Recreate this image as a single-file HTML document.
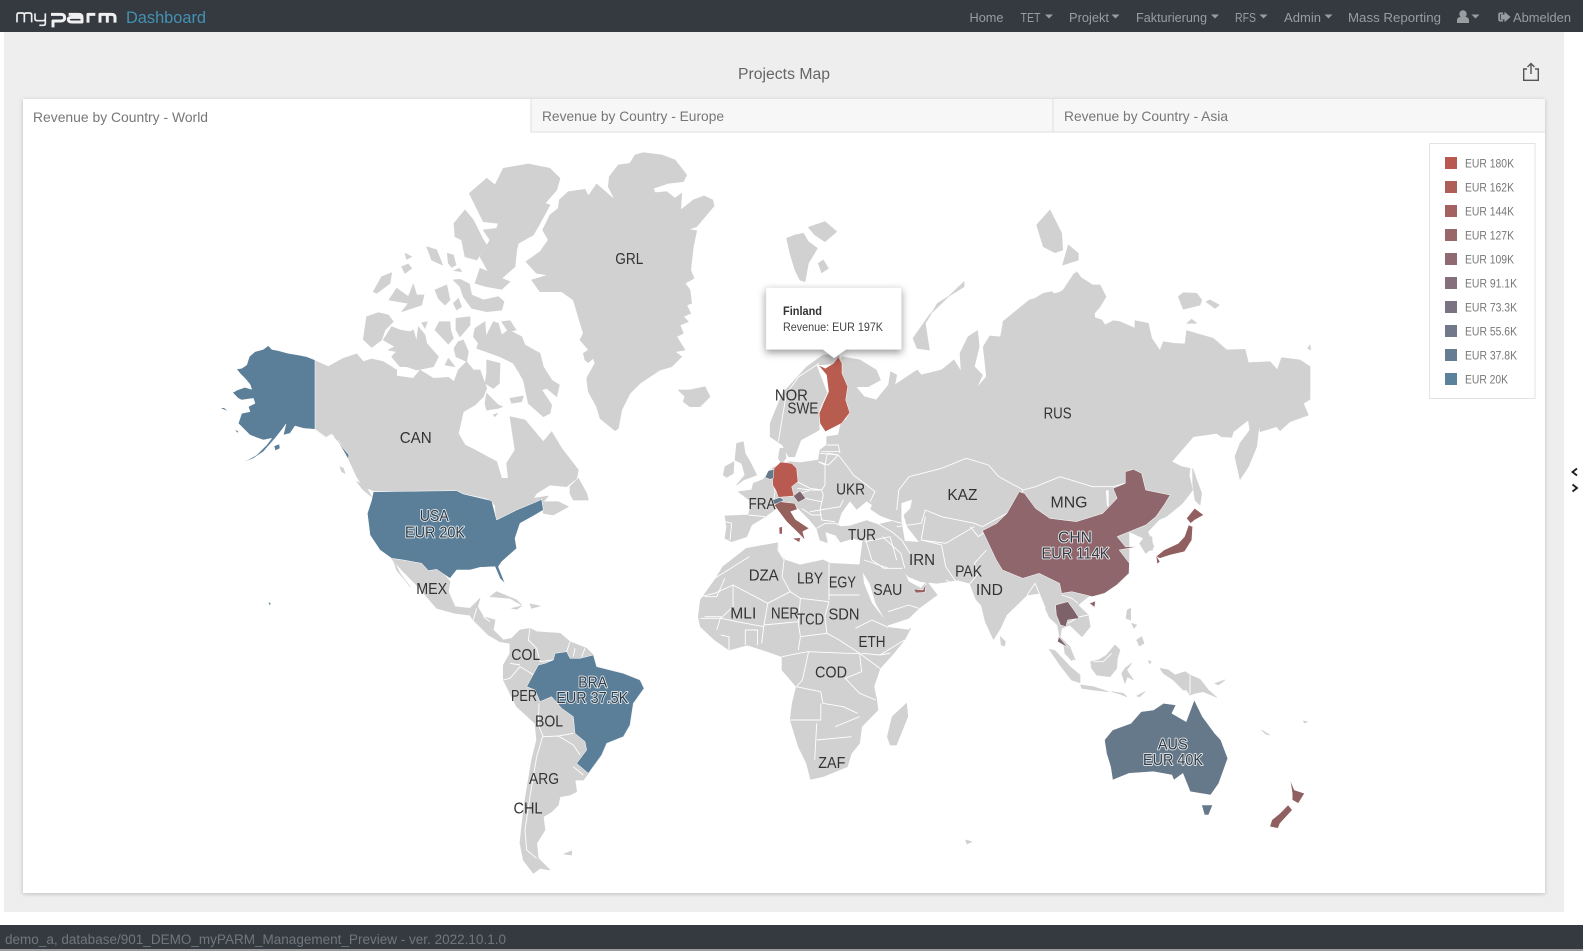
<!DOCTYPE html>
<html lang="en">
<head>
<meta charset="utf-8">
<title>myPARM Dashboard</title>
<style>
html,body{margin:0;padding:0;background:#fff;width:1583px;height:951px;overflow:hidden}
svg{display:block;font-family:"Liberation Sans",sans-serif}
.land polygon{fill:#d1d1d1;stroke:#d1d1d1;stroke-width:.7;stroke-linejoin:round;vector-effect:non-scaling-stroke}
.hole polygon{fill:#fff;stroke:#fff;stroke-width:.5;stroke-linejoin:round;vector-effect:non-scaling-stroke}
.b polyline{fill:none;stroke:#fff;stroke-width:.9;vector-effect:non-scaling-stroke;stroke-linejoin:round}
.c polygon{stroke:#fff;stroke-width:.5;stroke-linejoin:round;vector-effect:non-scaling-stroke}
.nav text{font-size:13px;fill:#9a9da0}
.tab{font-size:14px;fill:#777}
.lg text{font-size:11.5px;fill:#777}
.lb text{font-size:16px;fill:#333;text-anchor:middle}
.lv text{font-size:16px;fill:#2f3a44;text-anchor:middle;stroke:#fff;stroke-width:1.8;paint-order:stroke;stroke-linejoin:round;stroke-opacity:.85}
</style>
</head>
<body>
<svg xmlns="http://www.w3.org/2000/svg" width="1583" height="951" viewBox="0 0 1583 951">
<rect width="1583" height="951" fill="#fff"/>
<rect x="4" y="32" width="1560" height="880" fill="#eee"/>
<rect width="1583" height="32" fill="#343a40"/>
<rect y="925" width="1583" height="24" fill="#343a40"/>
<rect y="949" width="1583" height="2" fill="#9a9c9e"/>
<text x="5" y="944" font-size="13.5" fill="#6f777e" textLength="501" lengthAdjust="spacingAndGlyphs">demo_a, database/901_DEMO_myPARM_Management_Preview - ver. 2022.10.1.0</text>

<!-- logo -->
<g transform="scale(.3333)" fill="none" stroke="#f0f0f0" stroke-linejoin="round">
<path stroke-width="5" d="M51 67V45Q51 39 57 39H66Q73 39 73 45V67M73 45Q73 39 79 39H88Q95 39 95 45V67"/>
<path stroke-width="5" d="M105 40V55Q105 62 112 62H130Q136 62 136 56V40M136 60V70Q136 76 130 76H118"/>
<path stroke-width="9" d="M153 43H183Q194 43 194 53Q194 63 183 63H159V82"/>
<path stroke-width="9" d="M206 43H236Q246 43 246 52V66H216Q205 66 205 58Q205 52 216 52H244"/>
<path stroke-width="9" d="M264 68V43H286"/>
<path stroke-width="9" d="M300 68V43H334Q345 43 345 52V68M322 43V68"/>
</g>
<text x="126" y="23" font-size="17" fill="#4491b3" textLength="80" lengthAdjust="spacingAndGlyphs">Dashboard</text>

<!-- nav -->
<g class="nav">
<text x="969.5" y="22" textLength="34" lengthAdjust="spacingAndGlyphs">Home</text>
<text x="1020.5" y="22" textLength="20" lengthAdjust="spacingAndGlyphs">TET</text>
<text x="1069" y="22" textLength="40" lengthAdjust="spacingAndGlyphs">Projekt</text>
<text x="1136" y="22" textLength="71" lengthAdjust="spacingAndGlyphs">Fakturierung</text>
<text x="1235" y="22" textLength="21" lengthAdjust="spacingAndGlyphs">RFS</text>
<text x="1284" y="22" textLength="37" lengthAdjust="spacingAndGlyphs">Admin</text>
<text x="1348" y="22" textLength="93" lengthAdjust="spacingAndGlyphs">Mass Reporting</text>
<text x="1513" y="22" textLength="58" lengthAdjust="spacingAndGlyphs">Abmelden</text>
</g>
<g fill="#9a9da0">
<polygon points="1045,14.5 1053,14.5 1049,18.5"/>
<polygon points="1111.5,14.5 1119.5,14.5 1115.5,18.5"/>
<polygon points="1211,14.5 1219,14.5 1215,18.5"/>
<polygon points="1259.5,14.5 1267.5,14.5 1263.5,18.5"/>
<polygon points="1324.5,14.5 1332.5,14.5 1328.5,18.5"/>
<polygon points="1471.5,14.5 1479.5,14.5 1475.5,18.5"/>
<circle cx="1463" cy="14" r="3.7"/>
<path d="M1457 23v-2.5q0-3.5 3.5-3.5h5q3.5 0 3.5 3.5V23z"/>
<path d="M1503 12.5h-3q-1.7 0-1.7 1.7v5.6q0 1.7 1.7 1.7h3v-1.6h-2.8v-5.8h2.8z"/>
<path d="M1504.5 14.5v-2.7l6 5.2-6 5.2v-2.7h-3.5v-5z"/>
</g>

<!-- title + share -->
<text x="738" y="79" font-size="15.5" fill="#666" textLength="92" lengthAdjust="spacingAndGlyphs">Projects Map</text>
<g fill="none" stroke="#555" stroke-width="1.4">
<path d="M1527 69h-3.3v11.3h14.6V69H1535"/>
<path d="M1531 74V64M1527.5 67l3.5-3.5 3.5 3.5"/>
</g>

<!-- card -->
<rect x="23" y="99" width="1522" height="794" fill="#fff" style="filter:drop-shadow(0 1px 2px rgba(0,0,0,.2))"/>
<rect x="531" y="99" width="1014" height="33" fill="#f7f7f7"/>
<path d="M531 99V132H1545M1053 99V132" fill="none" stroke="#dfdfdf" stroke-width="1"/>
<text class="tab" x="33" y="122" textLength="175" lengthAdjust="spacingAndGlyphs">Revenue by Country - World</text>
<text class="tab" x="542" y="121" textLength="182" lengthAdjust="spacingAndGlyphs">Revenue by Country - Europe</text>
<text class="tab" x="1064" y="121" textLength="164" lengthAdjust="spacingAndGlyphs">Revenue by Country - Asia</text>

<!-- MAP LAND -->
<g class="land">
<!-- North America arctic / Canada (3x coords origin 200,140) -->
<g transform="translate(200,140) scale(.33333)">
<polygon points="345,662 385,680 430,655 470,642 490,665 515,657 550,665 590,690 590,708 640,715 660,690 700,715 745,712 762,725 775,690 800,665 820,690 840,690 860,745 850,770 825,795 790,815 775,880 795,915 825,930 890,965 905,1015 925,1015 920,970 945,930 930,830 975,840 1030,905 1055,875 1085,925 1135,990 1130,1015 1100,1040 1050,1035 1010,1060 1000,1075 1045,1068 1030,1085 1075,1085 1105,1100 1060,1125 1030,1120 1022,1078 960,1108 890,1145 885,1095 860,1075 790,1060 775,1052 520,1052 490,1040 470,1010 445,955 415,905 395,882 378,892 345,868"/>
<polygon points="1110,1040 1135,1015 1160,1060 1165,1080 1120,1080 1110,1060"/>
<polygon points="470,1025 495,1035 515,1070 490,1050"/>
<polygon points="420,980 430,985 435,1000 425,995"/>
<polygon points="500,530 535,518 565,525 580,545 555,570 545,600 515,622 490,598"/>
<polygon points="550,600 575,560 600,570 630,575 640,570 650,605 655,560 675,585 680,610 715,650 700,680 650,690 620,680 600,680 575,650 590,635 565,630 585,620"/>
<polygon points="615,340 635,350 620,358"/>
<polygon points="605,380 625,372 635,385 615,400"/>
<polygon points="520,455 545,410 575,398 570,430 530,460"/>
<polygon points="567,480 590,445 625,470 640,432 650,465 672,465 665,495 605,515 625,490"/>
<polygon points="680,320 710,330 728,375 695,360"/>
<polygon points="742,340 760,345 768,375 755,382 745,370"/>
<polygon points="762,392 778,385 785,395"/>
<polygon points="762,250 795,210 820,240 850,300 860,315 830,360 795,350 785,300 765,290"/>
<polygon points="808,160 860,115 885,135 910,85 985,72 1050,85 1080,115 1070,150 1035,190 1050,195 1020,250 1000,285 955,310 950,330 945,380 905,415 930,425 905,448 860,440 825,430 840,385 865,395 840,350 870,300 850,270 890,265 895,250 850,245"/>
<polygon points="760,420 780,418 808,432 815,465 850,480 895,470 912,485 905,510 860,515 815,505 790,470 780,440"/>
<polygon points="705,450 740,435 750,480 735,495 715,475"/>
<polygon points="760,490 775,475 785,500 770,510"/>
<polygon points="768,535 810,530 810,555 780,590 768,570"/>
<polygon points="705,570 718,545 750,545 752,570 760,595 745,612"/>
<polygon points="665,548 682,545 675,565"/>
<polygon points="775,605 790,600 805,635 800,665 790,660 768,650 762,625"/>
<polygon points="825,565 855,545 858,590 880,545 895,550 905,585 925,570 965,590 975,615 1020,640 1030,680 1055,720 1078,735 1070,770 1040,745 1025,750 1055,795 1050,820 1030,830 985,790 970,720 940,670 900,650 830,625 835,610 820,590"/>
<polygon points="905,545 930,542 948,570 925,575"/>
<polygon points="860,660 900,670 898,730 880,745 855,730 860,700"/>
<polygon points="855,790 860,760 895,795 908,800 895,805 860,810"/>
<polygon points="930,775 970,768 965,785 935,790"/>
<polygon points="880,825 893,820 885,830"/>
<polygon points="735,675 745,655 765,680"/>
<!-- Mexico, central america, south america (coords+420,1020 from 340,480 crop) -->
<g transform="translate(420,1020)">
<polygon points="155,237 250,250 295,265 330,305 325,335 345,380 390,385 420,355 410,390 385,405 345,400 290,385 260,350 225,310 190,275"/>
<polygon points="160,240 180,280 210,320 195,300 170,270"/>
<polygon points="385,400 400,395 410,375 430,410 465,420 460,450 490,480 515,475 510,490 480,485 445,465 400,420"/>
<polygon points="450,350 470,335 530,360 545,375 510,355"/>
<polygon points="570,372 600,378 575,385"/>
<polygon points="515,385 545,378 530,388"/>
<polygon points="510,480 540,450 570,445 590,455 660,460 690,485 740,505 760,525 770,560 850,580 900,600 912,625 880,670 870,735 850,770 800,790 785,825 745,880 730,900 705,900 710,935 690,945 660,950 655,975 635,995 610,1010 615,1050 590,1090 595,1135 630,1170 600,1165 580,1180 550,1140 540,1090 545,1040 555,960 575,840 590,780 585,730 530,680 490,600 490,555 510,520"/>
<polygon points="672,1122 695,1113 695,1125"/>
</g>
</g>
<!-- Greenland, Iceland, Svalbard (origin 520,140) -->
<g transform="translate(520,140) scale(.33333)">
<polygon points="18,365 60,335 85,300 68,270 90,225 115,205 118,180 145,155 195,148 205,168 230,132 285,180 265,140 268,110 295,75 330,70 345,45 370,38 425,45 465,60 500,105 490,125 445,130 400,145 405,158 440,155 465,175 485,160 482,210 520,180 552,168 578,180 582,198 555,230 530,260 505,268 530,272 520,320 512,390 522,415 495,430 510,450 515,490 500,495 512,520 490,530 505,545 480,555 490,580 470,590 495,630 465,635 485,650 455,680 420,690 360,730 330,760 305,810 295,865 285,872 240,835 230,800 205,755 200,715 225,670 215,640 180,600 190,580 160,480 125,455 60,455 35,420 85,405 50,400"/>
<polygon points="190,640 205,630 225,650 205,668 195,660"/>
<polygon points="475,750 510,750 555,740 570,770 540,800 510,800 490,785 495,770"/>
<polygon points="800,295 825,285 850,280 865,305 892,325 865,370 855,425 840,420 825,390 810,340"/>
<polygon points="865,262 885,255 915,245 950,275 915,305 885,285"/>
<polygon points="895,370 910,360 925,385 905,398"/>
</g>
<!-- Russia east (origin 1000,190) -->
<g transform="translate(1000,190) scale(.33333)">
<polygon points="198,295 230,245 245,265 260,285 300,285 318,320 300,350 275,380 305,390 315,405 340,392 360,395 405,415 405,392 445,400 455,445 480,482 490,455 520,460 555,462 560,422 640,445 680,480 735,478 745,518 810,515 832,540 845,503 900,510 930,530 930,628 910,640 925,675 870,695 840,722 830,710 780,725 785,680 750,720 745,690 700,725 695,742 665,740 650,730 580,740 515,815 545,830 570,835 565,880 560,900 0,900 0,450 10,395 60,385 65,350 130,310 155,305 165,315"/>
<polygon points="780,680 785,695 775,725 770,770 745,830 720,868 705,800 720,760 750,720"/>
<polygon points="578,835 590,870 605,910 600,945 585,930 578,880"/>
<polygon points="535,320 550,308 590,310 605,330 600,345 550,358"/>
<polygon points="618,335 630,330 658,345 645,355"/>
<polygon points="560,400 575,388 590,400"/>
<polygon points="110,105 150,60 185,130 188,180 165,188 130,170"/>
<polygon points="205,165 235,190 235,210 188,225"/>
<polygon points="923,475 930,465 932,480"/>
</g>
<!-- Eurasia mid (origin 660,260; 2.45x,3y) -->
<g transform="translate(660,260) scale(.40816,.33333)">
<polygon points="445,290 490,300 530,330 540,360 510,380 480,380 500,410 530,420 560,375 565,335 580,345 575,375 630,330 640,345 690,330 720,300 738,335 735,280 755,230 778,212 782,260 770,320 790,345 775,385 800,350 792,260 808,228 845,232 840,185 905,120 985,95 1015,40 1060,75 1100,850 720,900 500,620 440,510 465,460 430,380"/>
<polygon points="1150,600 1255,610 1295,640 1305,690 1280,730 1240,770 1190,795 1100,800 1100,600"/>
<polygon points="1150,815 1230,770 1195,815 1210,860 1190,880 1175,850 1185,835"/>
<polygon points="1185,830 1205,830 1207,870 1190,872"/>
<polygon points="620,235 660,165 745,65 745,80 680,130 650,190 660,270 630,265"/>
<!-- Scandinavia -->
<polygon points="437,282 400,285 360,320 330,360 300,400 270,490 270,530 300,555 315,590 330,590 345,540 390,510 390,450 410,395 385,315 445,310"/>
</g>
<!-- Europe (origin 710,420) -->
<g transform="translate(710,420) scale(.33333)">
<polygon points="385,45 350,50 350,75 330,90 325,120 270,128 240,125 215,130 185,145 160,178 130,190 125,210 85,215 125,245 115,285 45,288 50,320 45,355 65,365 110,350 125,315 165,290 200,265 225,265 262,262 295,295 320,325 330,360 352,368 345,335 375,345 380,370 430,355 465,365 460,420 690,420 690,0 395,0"/>
<polygon points="205,115 210,85 225,85 228,115 215,130"/>
<polygon points="80,70 100,65 105,100 120,125 140,165 100,180 80,195 105,165 95,130 75,120"/>
<polygon points="40,165 45,140 72,125 70,160 50,172"/>
</g>
<!-- Africa / South Asia (origin 680,540; 2.45x,3y) -->
<g transform="translate(680,540) scale(.40816,.33333)">
<polygon points="105,80 163,25 241,8 241,35 257,60 294,75 351,60 367,70 445,75 450,130 470,190 505,245 510,262 560,270 565,265 550,300 520,345 490,385 475,440 482,480 485,510 445,560 440,610 420,640 410,680 350,710 320,718 310,670 290,620 270,540 275,490 285,440 250,390 250,350 215,335 165,315 120,330 85,300 50,260 45,230 50,180 85,120"/>
<polygon points="555,490 558,530 530,615 515,615 508,590 520,530"/>
<polygon points="785,290 797,305 795,318 787,315"/>
<polygon points="450,-20 540,-20 545,85 560,125 590,145 605,125 630,165 585,205 560,235 510,255 480,190 465,130 440,80"/>
<polygon points="540,85 560,110 590,125 630,130 680,120 710,130 725,178 738,195 748,245 768,298 785,265 800,225 850,165 880,160 895,205 905,232 925,255 930,290 955,320 968,360 945,325 930,300 935,265 955,255 985,290 1005,260 1000,225 975,195 1000,170 1030,160 1100,100 1100,-100 540,-100"/>
<polygon points="700,900 715,905 703,912"/>
<polygon points="1425,570 1445,585 1435,582"/>
<polygon points="1527,543 1537,545 1530,549"/>
</g>
<!-- SE Asia (origin 1040,590) -->
<g transform="translate(1040,590) scale(.33333)">
<polygon points="28,178 45,182 90,230 120,255 120,278 95,270 60,225"/>
<polygon points="72,170 90,180 103,205 95,212 75,190"/>
<polygon points="152,215 175,210 200,195 225,165 240,180 232,205 230,235 210,260 170,255 155,235"/>
<polygon points="122,285 160,290 205,305 160,300 125,295"/>
<polygon points="245,250 255,235 275,220 260,240 280,270 262,260 255,280 250,265"/>
<polygon points="262,60 272,55 272,90 258,85"/>
<polygon points="290,150 305,140 312,160 298,168"/>
<polygon points="275,100 290,105 282,115"/>
<polygon points="360,235 385,240 405,255 435,245 450,255 480,268 505,300 530,322 490,305 465,310 450,315 440,300 430,300 400,270 370,250"/>
<polygon points="290,318 315,305 300,320"/>
<polygon points="525,280 555,270 535,285"/>
<polygon points="215,305 250,310 260,320 240,312"/>
<polygon points="325,212 333,214 330,222"/>
</g>
</g>

<!-- water holes -->
<g class="hole">
<g transform="translate(710,420) scale(.33333)">
<polygon points="385,312 395,280 420,245 440,270 470,245 485,255 480,268 510,288 545,302 505,312 470,300 420,316 390,318"/>
<polygon points="575,250 605,240 600,265 580,285 590,320 625,365 585,362 575,300"/>
<polygon points="375,345 395,375 380,372"/>
</g>
<g transform="translate(200,140) scale(.33333)">
<polygon points="942,705 955,695 960,720 945,725"/>
</g>
</g>

<!-- borders -->
<g class="b">
<g transform="translate(710,420) scale(.33333)">
<polyline points="262,185 300,205 335,210 345,195 345,135 352,100 385,105 420,150 430,165 470,195 495,215 480,245"/>
<polyline points="345,135 325,125"/>
<polyline points="330,100 385,105"/>
<polyline points="325,125 355,135 385,105"/>
<polyline points="350,75 385,75 390,100"/>
<polyline points="262,205 300,210 335,210 340,225 330,270 390,260 400,240"/>
<polyline points="260,225 300,210"/>
<polyline points="285,235 335,245"/>
<polyline points="300,275 330,270 335,300 375,305"/>
<polyline points="275,265 305,285 335,285"/>
<polyline points="320,325 345,310 375,310"/>
<polyline points="375,310 395,318"/>
<polyline points="185,145 195,215 190,250 200,265"/>
<polyline points="115,285 165,290"/>
<polyline points="48,305 65,310 60,360"/>
<polyline points="505,312 545,335 575,360 600,400"/>
<polyline points="465,365 540,350"/>
<polyline points="540,350 560,420"/>
<polyline points="510,290 540,300 575,310"/>
</g>
<g transform="translate(660,260) scale(.40816,.33333)">
<polyline points="580,750 585,690 610,650 690,625 750,595 805,615 830,650 890,690"/>
<polyline points="580,800 640,790 650,750 690,770 770,790 790,800 850,760 890,690"/>
<polyline points="890,690 920,680 980,650 1060,680 1110,680 1140,670"/>
<polyline points="650,770 640,840 700,850 770,800"/>
<polyline points="760,800 780,830 800,812"/>
<polyline points="690,855 700,920 725,965"/>
<polyline points="800,870 770,910 780,940 750,985 700,960"/>
<polyline points="545,830 590,880 600,925"/>
<polyline points="640,840 690,855"/>
<polyline points="500,900 560,925"/>
<polyline points="390,310 340,350 310,400 300,470 290,545"/>
<polyline points="385,315 410,395"/>
<polyline points="395,575 440,575"/>
</g>
<g transform="translate(680,540) scale(.40816,.33333)">
<polyline points="50,170 85,160 130,135 130,200 100,235 50,235"/>
<polyline points="85,115 170,50"/>
<polyline points="130,135 215,190 205,260"/>
<polyline points="205,260 140,245 100,235"/>
<polyline points="205,255 290,245"/>
<polyline points="215,190 270,155 295,175 290,250 295,290 290,330"/>
<polyline points="241,8 240,30 255,60 250,110 270,155"/>
<polyline points="365,70 365,180"/>
<polyline points="365,165 440,165"/>
<polyline points="295,175 365,185 355,230 360,280 390,300 440,340"/>
<polyline points="360,280 295,290"/>
<polyline points="250,350 290,340 315,335 410,340 440,340 490,385"/>
<polyline points="440,340 445,395 405,415 440,460 480,480"/>
<polyline points="315,335 300,420 285,440"/>
<polyline points="285,440 345,455 350,490 400,500 435,520"/>
<polyline points="345,490 345,540 270,540"/>
<polyline points="335,550 330,660"/>
<polyline points="335,600 420,590"/>
<polyline points="380,560 440,530"/>
<polyline points="430,265 470,240 510,262"/>
<polyline points="445,340 490,345 515,340"/>
<polyline points="490,345 550,300"/>
<polyline points="120,330 120,290 100,285"/>
<polyline points="160,315 160,270 190,270 190,315"/>
<polyline points="205,260 200,310"/>
<polyline points="60,230 100,230 90,270"/>
<polyline points="60,170 90,170 110,115"/>
<polyline points="510,215 560,195 585,205"/>
<polyline points="450,-20 470,60 500,85 545,85"/>
<polyline points="850,165 870,130 880,160"/>
<polyline points="975,190 960,175 935,165"/>
<polyline points="950,250 980,230 1000,225"/>
<polyline points="895,205 880,160"/>
</g>
<g transform="translate(1040,590) scale(.33333)">
<polyline points="160,215 190,215 215,190"/>
<polyline points="450,255 450,312"/>
</g>
<g transform="translate(340,480) scale(.33333)">
<polyline points="570,445 565,480 590,505 600,545 640,540"/>
<polyline points="490,600 510,595 540,560 590,590"/>
<polyline points="510,550 540,555"/>
<polyline points="597,670 595,735 610,770 655,768 700,795 720,825"/>
<polyline points="608,770 590,830 570,950 555,1050 560,1110 590,1135"/>
<polyline points="700,860 730,885"/>
<polyline points="655,768 700,760"/>
<polyline points="690,485 680,515"/>
<polyline points="705,505 700,530"/>
<polyline points="735,505 725,530"/>
<polyline points="410,385 400,420"/>
<polyline points="430,410 450,425"/>
</g>
</g>

<!-- coloured countries -->
<g class="c">
<g transform="translate(200,140) scale(.33333)" fill="#5b7f98">
<polygon points="345,660 320,650 295,645 265,640 235,632 215,628 205,617 190,628 165,635 148,650 140,675 125,685 110,687 120,700 135,715 150,733 155,748 135,742 112,750 98,758 115,775 125,780 160,775 165,790 145,800 150,815 125,820 115,850 130,865 150,885 170,893 190,900 215,895 200,915 170,945 128,968 160,955 190,935 225,895 245,870 258,852 250,885 270,880 285,858 310,865 345,868 370,885 378,892 395,882 415,905 445,958 447,945 430,925 410,895 395,882 378,892 345,868"/>
<polygon points="222,918 238,912 240,925 226,932"/>
<polygon points="103,870 114,872 115,880"/>
<polygon points="60,805 72,803 85,815 72,809"/>
</g>
<g transform="translate(340,480) scale(.33333)" fill="#5b7f98">
<polygon points="100,35 350,32 370,42 455,62 470,120 530,90 590,65 605,58 610,90 585,105 540,130 525,175 530,205 485,245 475,260 495,310 480,295 465,260 420,262 390,270 350,270 330,295 290,268 265,272 245,250 190,240 155,235 120,210 90,165 82,100 95,60"/>
<polygon points="560,620 595,555 615,550 640,540 645,520 680,515 690,535 720,535 760,525 770,560 850,580 900,600 912,625 880,670 870,735 850,770 800,790 785,825 745,880 710,850 740,810 735,785 705,760 700,710 665,685 635,650 600,665 585,630"/>
</g>
<polygon fill="#5b7f98" points="268,602 271,603 270,606"/>
<g transform="translate(660,260) scale(.40816,.33333)">
<polygon fill="#b85c50" points="437,290 446,310 446,340 460,380 455,420 465,458 445,490 405,515 392,490 390,460 400,430 413,395 408,345 388,315 405,325 425,310"/>
<g fill="#8f666b">
<polygon points="790,812 825,790 850,760 880,695 893,700 920,745 955,775 1020,785 1085,760 1120,715 1110,685 1140,670 1140,635 1160,628 1180,640 1190,690 1250,705 1235,735 1215,770 1190,795 1150,815 1120,830 1140,860 1170,860 1125,870 1150,910 1149,940 1119,975 1089,1000 1059,1010 1009,995 984,1000 979,970 929,940 889,955 839,930 824,900"/>
</g>
<g fill="#925f60">
<polygon points="1290,775 1310,745 1332,765 1310,780 1300,790"/>
<polygon points="1295,795 1305,800 1303,840 1285,875 1250,885 1225,895 1215,890 1235,870 1270,850 1285,830"/>
<polygon points="1215,885 1225,905 1218,912"/>
</g>
</g>
<g transform="translate(710,420) scale(.33333)">
<polygon fill="#b85a50" points="212,126 245,130 260,145 264,185 245,200 252,228 205,232 198,212 188,195 187,150"/>
<polygon fill="#66798a" points="165,172 175,152 192,148 190,175 180,178"/>
<polygon fill="#66798a" points="188,240 210,232 222,240 205,252 192,252"/>
<polygon fill="#7d636c" points="250,228 270,213 287,235 265,247"/>
<polygon fill="#96605c" points="193,255 211,245 254,250 262,268 242,275 256,298 297,325 278,335 285,360 266,340 230,305 205,272"/>
<polygon fill="#96605c" points="207,322 217,320 217,342 208,342"/>
<polygon fill="#96605c" points="247,355 272,353 268,367"/>
</g>
<g transform="translate(680,540) scale(.40816,.33333)">
<polygon fill="#95605f" points="572,147 595,150 603,130 600,157 578,159"/>
<polygon fill="#8f666b" points="1003,190 1018,183 1016,202"/>
<polygon fill="#7d626a" points="920,195 950,185 965,210 978,235 950,240 945,260 932,255 922,225"/>
<polygon fill="#7d626a" points="928,290 950,322 925,305"/>
<polygon fill="#66798a" points="1040,600 1060,570 1105,550 1130,515 1160,510 1185,490 1215,495 1205,520 1240,545 1260,480 1280,530 1310,580 1325,600 1342,655 1320,730 1300,765 1275,760 1250,755 1232,700 1210,720 1205,705 1160,695 1100,700 1060,720 1055,680 1045,640"/>
<polygon fill="#66798a" points="1278,795 1305,795 1295,825 1285,825"/>
<polygon fill="#905f60" points="1495,720 1505,750 1530,760 1515,790 1500,780 1500,760"/>
<polygon fill="#905f60" points="1490,795 1500,810 1470,850 1465,865 1445,860 1450,840 1470,820"/>
</g>
</g>

<!-- labels -->
<g class="lb">
<text x="629.3" y="264" textLength="28" lengthAdjust="spacingAndGlyphs">GRL</text>
<text x="415.7" y="443" textLength="32" lengthAdjust="spacingAndGlyphs">CAN</text>
<text x="791.4" y="400.5" textLength="33" lengthAdjust="spacingAndGlyphs">NOR</text>
<text x="802.9" y="413.5" textLength="31" lengthAdjust="spacingAndGlyphs">SWE</text>
<text x="1057.6" y="418.5" textLength="28" lengthAdjust="spacingAndGlyphs">RUS</text>
<text x="850.6" y="494.5" textLength="29" lengthAdjust="spacingAndGlyphs">UKR</text>
<text x="762" y="509" textLength="27" lengthAdjust="spacingAndGlyphs">FRA</text>
<text x="962.4" y="500" textLength="30" lengthAdjust="spacingAndGlyphs">KAZ</text>
<text x="1069" y="507.5" textLength="37" lengthAdjust="spacingAndGlyphs">MNG</text>
<text x="862" y="540" textLength="28" lengthAdjust="spacingAndGlyphs">TUR</text>
<text x="922" y="565" textLength="26" lengthAdjust="spacingAndGlyphs">IRN</text>
<text x="763.7" y="580.5" textLength="30" lengthAdjust="spacingAndGlyphs">DZA</text>
<text x="810" y="583.5" textLength="26" lengthAdjust="spacingAndGlyphs">LBY</text>
<text x="842.4" y="587.5" textLength="27" lengthAdjust="spacingAndGlyphs">EGY</text>
<text x="887.8" y="595" textLength="29" lengthAdjust="spacingAndGlyphs">SAU</text>
<text x="968.6" y="576.5" textLength="27" lengthAdjust="spacingAndGlyphs">PAK</text>
<text x="989.4" y="595" textLength="27" lengthAdjust="spacingAndGlyphs">IND</text>
<text x="743.3" y="618.5" textLength="26" lengthAdjust="spacingAndGlyphs">MLI</text>
<text x="785" y="618.5" textLength="28" lengthAdjust="spacingAndGlyphs">NER</text>
<text x="810.6" y="624.5" textLength="27" lengthAdjust="spacingAndGlyphs">TCD</text>
<text x="844" y="619.5" textLength="31" lengthAdjust="spacingAndGlyphs">SDN</text>
<text x="872" y="647" textLength="27" lengthAdjust="spacingAndGlyphs">ETH</text>
<text x="831" y="677.5" textLength="32" lengthAdjust="spacingAndGlyphs">COD</text>
<text x="831.8" y="768" textLength="27" lengthAdjust="spacingAndGlyphs">ZAF</text>
<text x="431.7" y="594" textLength="31" lengthAdjust="spacingAndGlyphs">MEX</text>
<text x="525.7" y="660" textLength="29" lengthAdjust="spacingAndGlyphs">COL</text>
<text x="524" y="701" textLength="26" lengthAdjust="spacingAndGlyphs">PER</text>
<text x="549" y="726.5" textLength="28" lengthAdjust="spacingAndGlyphs">BOL</text>
<text x="544" y="784" textLength="30" lengthAdjust="spacingAndGlyphs">ARG</text>
<text x="528" y="813.5" textLength="29" lengthAdjust="spacingAndGlyphs">CHL</text>
</g>
<g class="lv">
<text x="434.3" y="521" textLength="29" lengthAdjust="spacingAndGlyphs">USA</text>
<text x="435" y="537.5" textLength="60" lengthAdjust="spacingAndGlyphs">EUR 20K</text>
<text x="592.7" y="687.5" textLength="29" lengthAdjust="spacingAndGlyphs">BRA</text>
<text x="592.3" y="703" textLength="72" lengthAdjust="spacingAndGlyphs">EUR 37.5K</text>
<text x="1075" y="542.5" textLength="34" lengthAdjust="spacingAndGlyphs">CHN</text>
<text x="1075.5" y="558.5" textLength="68" lengthAdjust="spacingAndGlyphs">EUR 114K</text>
<text x="1172.7" y="749.5" textLength="30" lengthAdjust="spacingAndGlyphs">AUS</text>
<text x="1173" y="765" textLength="60" lengthAdjust="spacingAndGlyphs">EUR 40K</text>
</g>

<!-- tooltip -->
<path d="M766 287.5H901.5V349.5H846L834 358L823 349.5H766Z" fill="#fff" stroke="#e6e6e6" stroke-width=".6" style="filter:drop-shadow(0 3px 4px rgba(0,0,0,.4))"/>
<text x="783" y="315" font-size="11.5" font-weight="700" fill="#333" textLength="39" lengthAdjust="spacingAndGlyphs">Finland</text>
<text x="783" y="331" font-size="11.5" fill="#444" textLength="100" lengthAdjust="spacingAndGlyphs">Revenue: EUR 197K</text>

<!-- legend -->
<rect x="1429.5" y="143.5" width="105.5" height="255" fill="#fff" stroke="#e3e3e3"/>
<g>
<rect x="1445" y="157" width="12" height="12" fill="#b85850"/>
<rect x="1445" y="181" width="12" height="12" fill="#ae5d58"/>
<rect x="1445" y="205" width="12" height="12" fill="#a36161"/>
<rect x="1445" y="229" width="12" height="12" fill="#996669"/>
<rect x="1445" y="253" width="12" height="12" fill="#8f6a71"/>
<rect x="1445" y="277" width="12" height="12" fill="#846f7a"/>
<rect x="1445" y="301" width="12" height="12" fill="#7a7382"/>
<rect x="1445" y="325" width="12" height="12" fill="#70788a"/>
<rect x="1445" y="349" width="12" height="12" fill="#657c93"/>
<rect x="1445" y="373" width="12" height="12" fill="#5b819b"/>
</g>
<g class="lg">
<text x="1465" y="167.5" textLength="49" lengthAdjust="spacingAndGlyphs">EUR 180K</text>
<text x="1465" y="191.5" textLength="49" lengthAdjust="spacingAndGlyphs">EUR 162K</text>
<text x="1465" y="215.5" textLength="49" lengthAdjust="spacingAndGlyphs">EUR 144K</text>
<text x="1465" y="239.5" textLength="49" lengthAdjust="spacingAndGlyphs">EUR 127K</text>
<text x="1465" y="263.5" textLength="49" lengthAdjust="spacingAndGlyphs">EUR 109K</text>
<text x="1465" y="287.5" textLength="52" lengthAdjust="spacingAndGlyphs">EUR 91.1K</text>
<text x="1465" y="311.5" textLength="52" lengthAdjust="spacingAndGlyphs">EUR 73.3K</text>
<text x="1465" y="335.5" textLength="52" lengthAdjust="spacingAndGlyphs">EUR 55.6K</text>
<text x="1465" y="359.5" textLength="52" lengthAdjust="spacingAndGlyphs">EUR 37.8K</text>
<text x="1465" y="383.5" textLength="43" lengthAdjust="spacingAndGlyphs">EUR 20K</text>
</g>

<!-- side chevrons -->
<path d="M1577 468.5L1572.5 472L1577 475.5M1572.5 484.5L1577 488L1572.5 491.5" fill="none" stroke="#222" stroke-width="1.9"/>
</svg>
</body>
</html>
